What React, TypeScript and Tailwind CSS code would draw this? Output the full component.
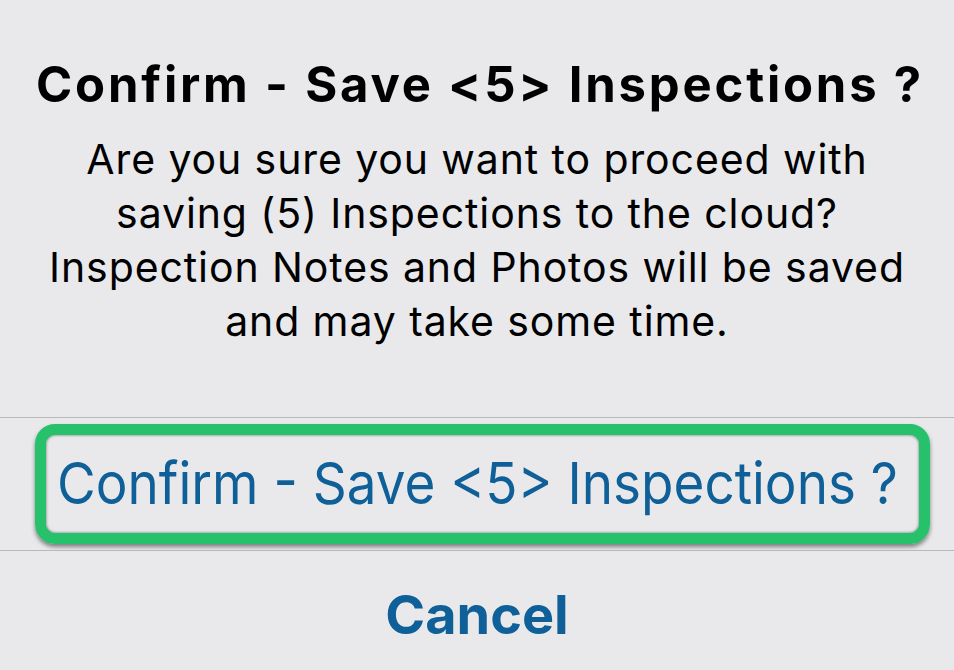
import React from 'react';

const font = { fontFamily: 'Inter, "Noto Sans", sans-serif' };

export default function App() {
  return (
    <div className="w-[954px] h-[670px] overflow-hidden bg-[#e9e9eb] flex flex-col" style={font}>
      {/* Alert header */}
      <div className="flex flex-col items-center pt-[56px] h-[417px]">
        <h1 className="text-[49px] leading-[58px] font-bold text-black tracking-[2.8px] whitespace-nowrap ml-[6px]">
          Confirm - Save &lt;5&gt; Inspections ?
        </h1>
        <p className="mt-[18px] text-[41px] leading-[54px] text-center text-black tracking-[0.9px]">
          Are you sure you want to proceed with
          <br />
          saving (5) Inspections to the cloud?
          <br />
          Inspection Notes and Photos will be saved
          <br />
          and may take some time.
        </p>
      </div>

      <div className="h-px bg-[#b9b9bc]" />

      {/* Confirm action, highlighted */}
      <div className="h-[132px] flex items-center justify-center">
        <div className="w-[895px] h-[120px] ml-[11px] rounded-[20px] border-[11px] border-[#27c16b] shadow-[0_3px_4px_rgba(0,0,0,0.45),inset_0_0_3px_rgba(0,0,0,0.55)] flex items-center justify-center">
          <span className="text-[53px] text-[#0f5f98] font-normal whitespace-nowrap scale-y-110 mr-[10px]">
            Confirm - Save &lt;5&gt; Inspections ?
          </span>
        </div>
      </div>

      <div className="h-px bg-[#b9b9bc]" />

      {/* Cancel action */}
      <div className="flex-1 flex items-center justify-center">
        <span className="text-[54px] font-bold text-[#0f5f98] mt-[8px]">Cancel</span>
      </div>
    </div>
  );
}
